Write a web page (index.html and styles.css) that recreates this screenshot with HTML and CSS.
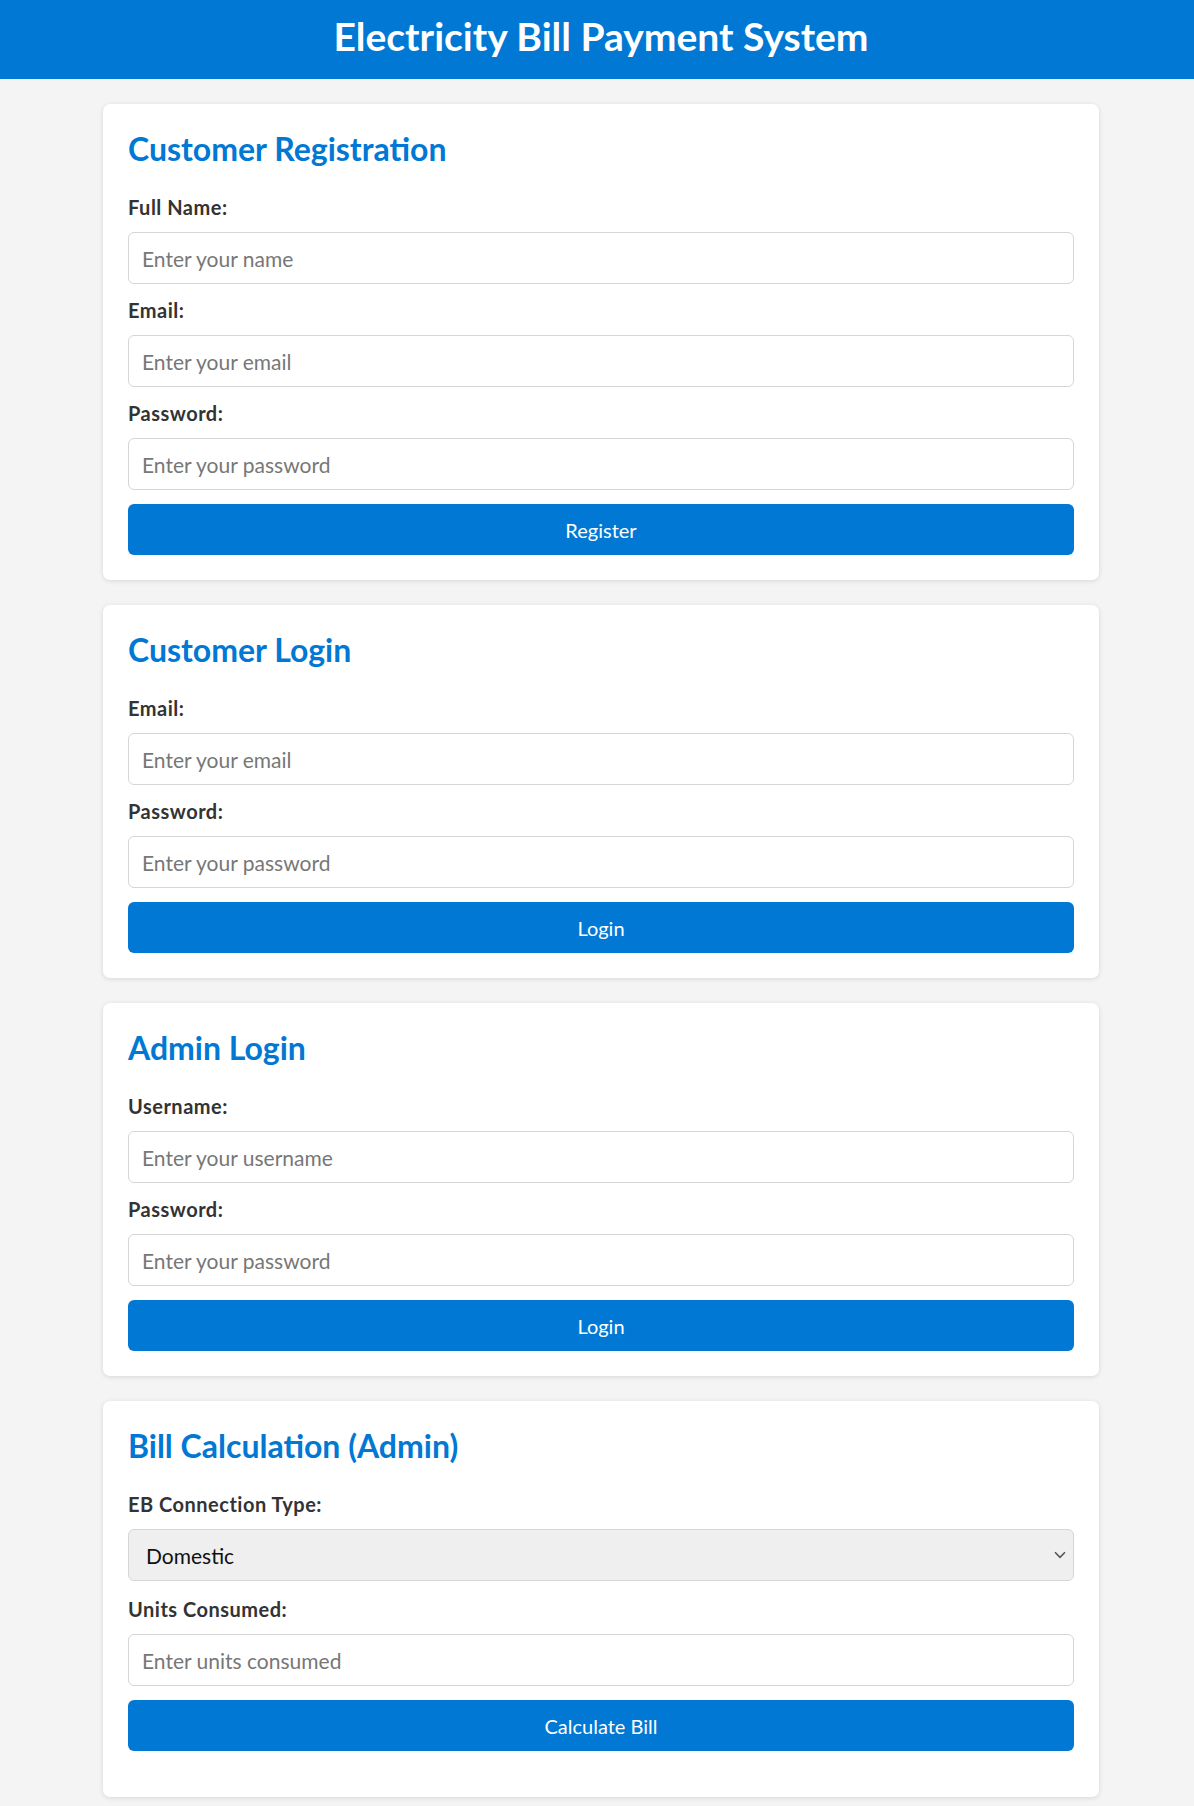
FILE: index.html
```html
<!DOCTYPE html>
<html lang="en">
<head>
<meta charset="utf-8">
<title>Electricity Bill Payment System</title>
<link rel="stylesheet" href="styles.css">
</head>
<body>
<header class="site-header">
  <h1 class="site-title">Electricity Bill Payment System</h1>
</header>
<main class="container">
  <section class="card">
    <h2 class="card-title">Customer Registration</h2>
    <form class="form">
      <label class="label" for="reg-name">Full Name:</label>
      <input class="field" id="reg-name" type="text" placeholder="Enter your name">
      <label class="label" for="reg-email">Email:</label>
      <input class="field" id="reg-email" type="email" placeholder="Enter your email">
      <label class="label" for="reg-pass">Password:</label>
      <input class="field" id="reg-pass" type="password" placeholder="Enter your password">
      <button class="btn" type="button">Register</button>
    </form>
  </section>
  <section class="card">
    <h2 class="card-title">Customer Login</h2>
    <form class="form">
      <label class="label" for="cl-email">Email:</label>
      <input class="field" id="cl-email" type="email" placeholder="Enter your email">
      <label class="label" for="cl-pass">Password:</label>
      <input class="field" id="cl-pass" type="password" placeholder="Enter your password">
      <button class="btn" type="button">Login</button>
    </form>
  </section>
  <section class="card">
    <h2 class="card-title">Admin Login</h2>
    <form class="form">
      <label class="label" for="al-user">Username:</label>
      <input class="field" id="al-user" type="text" placeholder="Enter your username">
      <label class="label" for="al-pass">Password:</label>
      <input class="field" id="al-pass" type="password" placeholder="Enter your password">
      <button class="btn" type="button">Login</button>
    </form>
  </section>
  <section class="card">
    <h2 class="card-title">Bill Calculation (Admin)</h2>
    <form class="form">
      <label class="label" for="eb-type">EB Connection Type:</label>
      <div class="select-wrap">
        <select class="field select" id="eb-type">
          <option>Domestic</option>
          <option>Commercial</option>
        </select>
        <svg class="chevron" viewBox="0 0 12 8" width="12" height="8" aria-hidden="true"><path d="M1 1.3 L6 6.3 L11 1.3" fill="none" stroke="#555" stroke-width="1.6"/></svg>
      </div>
      <label class="label" for="units">Units Consumed:</label>
      <input class="field" id="units" type="number" placeholder="Enter units consumed">
      <button class="btn" type="button">Calculate Bill</button>
    </form>
    <div class="result"></div>
  </section>
</main>
</body>
</html>
```
FILE: styles.css
```css
* { box-sizing: border-box; }

html, body {
  margin: 0;
  padding: 0;
  background: #f4f4f4;
  font-family: Lato, "Noto Sans", Arial, sans-serif;
  color: #333;
}

.site-header {
  background: #0078d4;
  height: 79px;
  display: flex;
  align-items: center;
  justify-content: center;
  padding: 0 0 7px 8px;
}

.site-title {
  margin: 0;
  color: #fff;
  font-size: 39px;
  font-weight: 700;
  line-height: 1;
}

.container {
  display: flex;
  flex-direction: column;
  align-items: center;
  gap: 25px;
  padding: 25px 0 25px 8px;
}

.card {
  width: 996px;
  background: #fff;
  border-radius: 7px;
  box-shadow: 0 1px 5px rgba(0, 0, 0, 0.12);
  padding: 25px;
}

.card-title {
  margin: 0 0 26px;
  color: #0078d4;
  font-size: 32px;
  font-weight: 700;
  line-height: 40px;
}

.form {
  display: flex;
  flex-direction: column;
}

.label {
  display: block;
  font-size: 20px;
  font-weight: 700;
  letter-spacing: 0.5px;
  line-height: 24px;
  color: #333;
  margin-bottom: 13px;
}

.field {
  width: 100%;
  height: 52px;
  margin: 0 0 14px;
  padding: 0 13px;
  border: 1px solid #d6d6d6;
  border-radius: 6px;
  background: #fff;
  font-family: inherit;
  font-size: 21px;
  color: #222;
  outline: none;
}

.field::placeholder {
  color: #777;
}

.select-wrap {
  position: relative;
}

.select {
  appearance: none;
  -webkit-appearance: none;
  background: #efefef;
  padding-left: 17px;
  color: #111;
  margin-bottom: 16px;
}

.chevron {
  position: absolute;
  right: 8px;
  top: 22px;
}

.btn {
  height: 51px;
  border: none;
  border-radius: 6px;
  background: #0078d4;
  color: #fff;
  font-family: inherit;
  font-size: 20px;
  cursor: pointer;
}

.result {
  margin-top: 21px;
}
```
